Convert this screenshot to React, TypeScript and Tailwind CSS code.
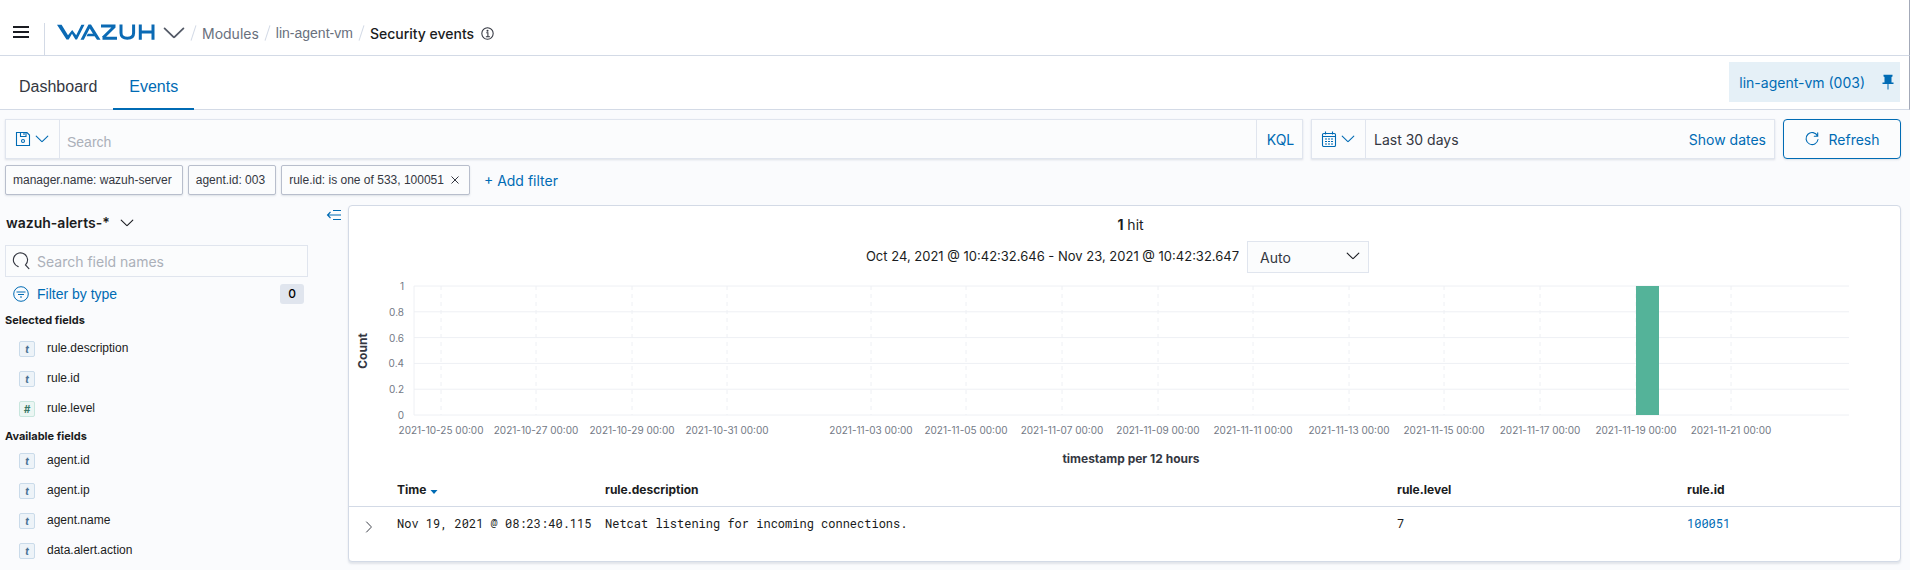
import React from "react";

const LINK = "text-[#006BB4]";
const ARIAL = "font-['Liberation_Sans',Arial,sans-serif]";

function Chevron({ className }: { className: string }) {
  return (
    <svg viewBox="0 0 16 16" className={className} fill="none" stroke="currentColor" strokeWidth="1.1" strokeLinecap="round" strokeLinejoin="round" aria-hidden="true">
      <path d="M2.2 5.2 7.6 10.4q.4.4.8 0L13.800 5.2" />
    </svg>
  );
}

function WazuhLogo() {
  return (
    <svg viewBox="0 0 98 18" className="h-[18px] w-[98px]" fill="none" stroke="#0B6AB4" strokeWidth="3" role="img" aria-label="Wazuh">
      <path d="M0 .8H4.600L11 11.200 15.200 6 19.200 11.200 24.400 .8H27.500L20 15.500H18.400L15 9.800 11.700 15.500H9.500Z" fill="#0B6AB4" stroke="none" />
      <path d="M23.500 15.800 31.500 .6H34L43.500 15.800H40L37.600 12.200H29.500L30.800 9.800H36L32.700 4.400 26.800 15.800Z" fill="#0B6AB4" stroke="none" />
      <path d="M44 2H58.500M45.500 14.200H60M57.500 2.500 46 13.800" strokeWidth="3" />
      <path d="M64 .6V9Q64 14.300 70.300 14.300Q76.600 14.300 76.600 9V.6" />
      <path d="M83.300 .6V15.800M96 .6V15.800M83.300 8H96" />
    </svg>
  );
}

function Slash() {
  return <span className="mx-2 h-4 w-px rotate-[18deg] bg-[#D3DAE6]" />;
}

function InfoIcon() {
  return (
    <svg viewBox="0 0 16 16" className="h-[13px] w-[13px]" fill="none" stroke="currentColor" strokeWidth="1.3" aria-hidden="true">
      <circle cx="8" cy="8" r="7" />
      <path d="M6.500 7H8.500V12M6 12H11" />
      <circle cx="8" cy="4.500" r=".6" fill="currentColor" />
    </svg>
  );
}

function Header() {
  return (
    <header className="flex h-14 items-end border-b border-r border-b-[#D3DAE6] border-r-[#A3A9B8] bg-white">
      <button aria-label="Open menu" className="mb-[17px] ml-[13px] flex w-4 flex-col gap-[3px]">
        <span className="h-[2px] w-4 bg-[#1a1c21]" />
        <span className="h-[2px] w-4 bg-[#1a1c21]" />
        <span className="h-[2px] w-4 bg-[#1a1c21]" />
      </button>
      <div className="ml-[15px] h-8 w-px bg-[#D3DAE6]" />
      <nav aria-label="Breadcrumb" className="mb-[11px] ml-3 flex h-[22px] items-center text-[14px] text-[#69707D]">
        <button aria-label="Wazuh menu" className="-mr-[2px] flex items-center gap-[6px]">
          <WazuhLogo />
          <Chevron className="h-[26px] w-[26px] text-[#535966]" />
        </button>
        <Slash />
        <a href="#modules">Modules</a>
        <Slash />
        <a href="#agent" className={ARIAL}>lin-agent-vm</a>
        <Slash />
        <span className="font-medium text-[#1a1c21]">Security events</span>
        <button aria-label="About this module" className="ml-[7px] text-[#343741]">
          <InfoIcon />
        </button>
      </nav>
    </header>
  );
}

function TabBar() {
  return (
    <div className="flex h-[54px] justify-between border-b border-r border-b-[#D3DAE6] border-r-[#A3A9B8] bg-white">
      <nav className={"flex text-[16px] leading-6 " + ARIAL} aria-label="Views">
        <a href="#dashboard" className="pl-[19px] pr-4 pt-[19px] text-[#343741]">Dashboard</a>
        <a href="#events" className="-mb-px border-b-2 border-[#006BB4] px-4 pt-[19px] text-[#006BB4]">Events</a>
      </nav>
      <button className="mr-[9px] mt-[6px] flex h-10 items-center gap-[17px] bg-[#E5F0F7] pl-[10px] pr-[6px] text-[14px] text-[#006BB4]">
        lin-agent-vm (003)
        <svg viewBox="0 0 12 16" className="h-4 w-3" fill="currentColor" aria-hidden="true">
          <path d="M1.500 .8H10.500V2.500L9.500 3V8.500H11.500V10H6.500V15.500H5.500V10H.5V8.500H2.500V3L1.500 2.500Z" />
        </svg>
      </button>
    </div>
  );
}

const BOX = "flex h-10 border border-[#E0E5EE] bg-[#FBFCFD] shadow-[0_1px_2px_rgba(152,162,179,0.3)]";

function QueryBar() {
  return (
    <div className="flex gap-2 pl-[5px] pr-[9px] pt-[9px]">
      <div className={BOX + " flex-1"}>
        <button aria-label="Saved queries" className="flex w-[54px] items-center gap-[3px] border-r border-[#E0E5EE] pl-[9px] text-[#006BB4]">
          <svg viewBox="0 0 16 16" className="h-4 w-4" fill="none" stroke="currentColor" strokeWidth="1.1" aria-hidden="true">
            <path d="M1.500 1.500H12L14.500 4V14.500H1.500ZM5.500 1.500V5.500H11V1.500M9 2V4" />
            <circle cx="8" cy="10" r="1.500" />
          </svg>
          <Chevron className="h-4 w-4" />
        </button>
        <input aria-label="Search" placeholder="Search" className={"min-w-0 flex-1 px-[7px] pt-[6px] text-[14px] outline-none placeholder:text-[#ABB0B9] " + ARIAL} />
        <button className="w-[46px] border-l border-[#E0E5EE] pl-[2px] text-[14px] text-[#006BB4]">KQL</button>
      </div>
      <div className={BOX + " w-[464px]"}>
        <button aria-label="Quick date ranges" className="flex w-[54px] items-center gap-[3px] border-r border-[#E0E5EE] pl-[9px] text-[#006BB4]">
          <svg viewBox="0 0 16 16" className="h-4 w-4" fill="none" stroke="currentColor" strokeWidth="1.1" aria-hidden="true">
            <rect x="1.500" y="2.500" width="13" height="13" rx="1.200" />
            <path d="M1.500 5.500H14.500M4.500 .5V3.500M11.500 .5V3.500" />
            <path d="M4 8H12M4 10.500H12M4 13H12" strokeDasharray="2 1" />
          </svg>
          <Chevron className="h-4 w-4" />
        </button>
        <button className="flex flex-1 items-center justify-between px-2 text-[14px] text-[#343741]">
          Last 30 days
          <span className={LINK}>Show dates</span>
        </button>
      </div>
      <button className="flex h-10 w-[118px] items-center justify-center gap-2 rounded-[4px] border border-[#006BB4] bg-[#FBFCFD] text-[14px] text-[#006BB4] shadow-[0_1px_2px_rgba(152,162,179,0.3)]">
        <svg viewBox="0 0 16 16" className="h-4 w-4" fill="none" stroke="currentColor" strokeWidth="1.1" strokeLinecap="round" aria-hidden="true">
          <path d="M13.500 5A6 6 0 1 0 14 8.500M13.700 1.800V5.200H10.300" />
        </svg>
        Refresh
      </button>
    </div>
  );
}

const PILL =
  "flex h-[30px] items-center rounded-[2px] border border-[#B8BECC] bg-[#FBFCFD] pl-[7px] pr-[10px] text-[12px] text-[#343741] shadow-[0_1px_2px_rgba(152,162,179,0.3)] font-['Liberation_Sans',Arial,sans-serif]";

function FilterBar() {
  return (
    <div className="flex gap-[5px] pl-[5px] pt-[6px]">
      <button className={PILL}>manager.name: wazuh-server</button>
      <button className={PILL}>agent.id: 003</button>
      <button className={PILL}>
        rule.id: is one of 533, 100051
        <svg viewBox="0 0 8 8" className="ml-[7px] h-2 w-2" stroke="currentColor" strokeWidth="1" aria-hidden="true">
          <path d="M.5 .5 7.500 7.500M7.500 .5 .5 7.500" />
        </svg>
      </button>
      <button className="ml-[9px] text-[14px] text-[#006BB4]">+ Add filter</button>
    </div>
  );
}

function FieldList({ title, fields, spaced }: { title: string; fields: string[]; spaced?: boolean }) {
  return (
    <section>
      <h3 className="text-[11px] font-bold leading-4 text-[#1a1c21]">{title}</h3>
      <ul className={spaced ? "pt-[5px]" : "pt-px"}>
        {fields.map((f) => {
          const num = f === "rule.level";
          return (
            <li key={f} className={"flex h-[30px] items-center gap-3 pl-[14px] text-[12px] text-[#1a1c21] " + ARIAL}>
              <span
                className={
                  "mt-[2px] flex h-4 w-4 items-center justify-center rounded-[2px] border font-['Inter',sans-serif] text-[10px] font-bold italic leading-none " +
                  (num ? "border-[#C8E6DE] bg-[#EBF6F3] text-[#387765]" : "border-[#CADBEA] bg-[#EDF3F8] text-[#4A7194]")
                }
              >
                {num ? "#" : "t"}
              </span>
              {f}
            </li>
          );
        })}
      </ul>
    </section>
  );
}

function Sidebar() {
  return (
    <aside className="w-[348px] shrink-0 pl-[5px]">
      <div className="flex items-start justify-between pr-[6px]">
        <button className="mt-2 flex items-center gap-[9px] pl-px text-[14px] font-semibold leading-5 text-[#1a1c21]">
          wazuh-alerts-*
          <Chevron className="h-4 w-4" />
        </button>
        <button aria-label="Collapse sidebar" className="mt-1 text-[#006BB4]">
          <svg viewBox="0 0 16 12" className="h-3 w-4" fill="none" stroke="currentColor" strokeWidth="1.1" aria-hidden="true">
            <path d="M7 1.500H15M1.500 6H15M7 10.500H15M4.500 3 1.500 6 4.500 9" />
          </svg>
        </button>
      </div>
      <div className="mt-3 flex h-8 w-[303px] items-center gap-[7px] border border-[#E0E5EE] bg-[#FBFCFD] pl-[6px]">
        <svg viewBox="0 0 16 16" className="h-[18px] w-[18px] text-[#343741]" fill="none" stroke="currentColor" strokeLinecap="round" aria-hidden="true">
          <path d="M5.500 13A6.300 6.300 0 1 1 12 11.500L15 14.800" />
        </svg>
        <input aria-label="Search field names" placeholder="Search field names" className="min-w-0 flex-1 text-[14px] outline-none placeholder:text-[#ABB0B9]" />
      </div>
      <div className="mt-[7px] flex h-5 w-[299px] items-center justify-between pl-2">
        <button className={"flex items-center gap-2 text-[14px] text-[#006BB4] " + ARIAL}>
          <svg viewBox="0 0 16 16" className="h-4 w-4" fill="none" stroke="currentColor" aria-hidden="true">
            <circle cx="8" cy="8" r="7.300" />
            <path d="M3.500 6H12.500M5 8.500H11M7 11H9" />
          </svg>
          Filter by type
        </button>
        <span className="flex h-5 w-6 items-center justify-center rounded-[3px] bg-[#E0E5EE] text-[12px] font-medium text-black">0</span>
      </div>
      <div className="mt-2 flex flex-col gap-[5px]">
        <FieldList title="Selected fields" fields={["rule.description", "rule.id", "rule.level"]} spaced />
        <FieldList title="Available fields" fields={["agent.id", "agent.ip", "agent.name", "data.alert.action"]} />
      </div>
    </aside>
  );
}

const TICKS = [
  { x: 27, label: "2021-10-25 00:00" },
  { x: 122, label: "2021-10-27 00:00" },
  { x: 218, label: "2021-10-29 00:00" },
  { x: 313, label: "2021-10-31 00:00" },
  { x: 457, label: "2021-11-03 00:00" },
  { x: 552, label: "2021-11-05 00:00" },
  { x: 648, label: "2021-11-07 00:00" },
  { x: 744, label: "2021-11-09 00:00" },
  { x: 839, label: "2021-11-11 00:00" },
  { x: 935, label: "2021-11-13 00:00" },
  { x: 1030, label: "2021-11-15 00:00" },
  { x: 1126, label: "2021-11-17 00:00" },
  { x: 1222, label: "2021-11-19 00:00" },
  { x: 1317, label: "2021-11-21 00:00" },
];

function Histogram() {
  return (
    <svg viewBox="0 0 1551 190" className="mt-2 block w-full" role="img" aria-label="Count of events per 12 hours">
      <g transform="translate(65 5)">
        {[1, 0.8, 0.6, 0.4, 0.2, 0].map((v, i) => (
          <g key={v}>
            <path d={`M0 ${i * 25.8}H1435`} stroke="#EEF0F4" strokeWidth="1" />
            <text x="-10" y={i * 25.8 + 4} textAnchor="end" fontSize="10" fill="#737985">{v}</text>
          </g>
        ))}
        <path d="M0 0V129" stroke="#EEF0F4" />
        {TICKS.map((t) => (
          <g key={t.label}>
            <path d={`M${t.x} 0V129`} stroke="#EEF0F4" strokeDasharray="4 4" />
            <text x={t.x} y="148" textAnchor="middle" fontSize="10" fill="#737985">{t.label}</text>
          </g>
        ))}
        <rect x="1222" y="0" width="23" height="129" fill="#54B399" />
        <text x="717" y="177" textAnchor="middle" fontSize="12" fontWeight="700" fill="#343741">timestamp per 12 hours</text>
        <text transform="translate(-47 65) rotate(-90)" textAnchor="middle" fontSize="12" fontWeight="700" fill="#343741">Count</text>
      </g>
    </svg>
  );
}

function Results() {
  return (
    <main className="mr-[9px] flex min-w-0 flex-1 flex-col self-start rounded-[4px] border border-[#D3DAE6] bg-white pb-[21px] shadow-[0_2px_2px_rgba(152,162,179,0.25)]">
      <p className="pl-3 pt-[9px] text-center text-[14px] leading-5 text-[#1a1c21]">
        <strong>1</strong> hit
      </p>
      <div className="mt-[6px] flex items-center justify-center gap-2 pr-[14px] text-[13px] text-[#1a1c21]">
        <span>Oct 24, 2021 @ 10:42:32.646 - Nov 23, 2021 @ 10:42:32.647</span>
        <span className="relative flex">
          <select aria-label="Interval" className="h-8 w-[122px] appearance-none border border-[#E0E5EE] bg-[#FBFCFD] pl-3 text-[14px] text-[#343741]">
            <option>Auto</option>
          </select>
          <Chevron className="pointer-events-none absolute right-2 top-[7px] h-4 w-4" />
        </span>
      </div>
      <Histogram />
      <table className="mt-[3px] w-full table-fixed text-left text-[12px] text-[#1a1c21]">
        <colgroup>
          <col className="w-[48px]" />
          <col className="w-[208px]" />
          <col />
          <col className="w-[290px]" />
          <col className="w-[213px]" />
        </colgroup>
        <thead>
          <tr className="h-8 border-b border-[#D3DAE6]">
            <th />
            <th className="font-bold">
              <span className="flex items-center gap-1">
                Time
                <svg viewBox="0 0 8 8" className="mt-1 h-2 w-2" fill="#006BB4" aria-hidden="true"><path d="M.5 2H7.500L4 6Z" /></svg>
              </span>
            </th>
            <th className="font-bold">rule.description</th>
            <th className="font-bold">rule.level</th>
            <th className="font-bold">rule.id</th>
          </tr>
        </thead>
        <tbody className="font-['Roboto_Mono','Liberation_Mono',monospace]">
          <tr className="h-[34px]">
            <td>
              <button aria-label="Expand row" className="ml-[13px] mt-2 block text-[#343741]"><Chevron className="h-[14px] w-[14px] -rotate-90" /></button>
            </td>
            <td>Nov 19, 2021 @ 08:23:40.115</td>
            <td>Netcat listening for incoming connections.</td>
            <td>7</td>
            <td><a href="#rule-100051" className={LINK}>100051</a></td>
          </tr>
        </tbody>
      </table>
    </main>
  );
}

export default function App() {
  return (
    <div className="min-h-screen bg-[#FAFBFD] font-['Inter',sans-serif]">
      <Header />
      <TabBar />
      <QueryBar />
      <FilterBar />
      <div className="mt-[10px] flex">
        <Sidebar />
        <Results />
      </div>
    </div>
  );
}
